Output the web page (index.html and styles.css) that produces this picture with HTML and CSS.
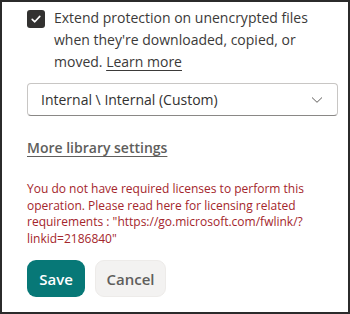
FILE: index.html
```html
<!DOCTYPE html>
<html>
<head>
<meta charset="utf-8">
<link rel="stylesheet" href="styles.css">
</head>
<body>
<div class="frame">
  <div class="check-row">
    <span class="checkbox">
      <svg width="12" height="12" viewBox="0 0 12 12"><path d="M2.2 6.3 L4.8 8.8 L9.8 3.4" fill="none" stroke="#fff" stroke-width="1.6" stroke-linecap="round" stroke-linejoin="round"/></svg>
    </span>
    <p class="check-text">Extend protection on unencrypted files when they're downloaded, copied, or moved. <a class="learn">Learn more</a></p>
  </div>
  <div class="dropdown">
    <span class="dd-text">Internal \ Internal (Custom)</span>
    <svg class="chev" width="12" height="8" viewBox="0 0 12 8"><path d="M1 1.5 L6 6.3 L11 1.5" fill="none" stroke="#605e5c" stroke-width="1"/></svg>
  </div>
  <a class="more">More library settings</a>
  <p class="error">You do not have required licenses to perform this operation. Please read here for licensing related requirements : "https://go.microsoft.com/fwlink/?linkid=2186840"</p>
  <div class="buttons">
    <button class="btn save">Save</button>
    <button class="btn cancel">Cancel</button>
  </div>
</div>
</body>
</html>
```
FILE: styles.css
```css
* { box-sizing: border-box; }
html, body { margin: 0; padding: 0; background: #fff; }
body { font-family: "Open Sans", "Noto Sans", sans-serif; color: #323130; }
.frame {
  width: 350px;
  height: 314px;
  border: 2px solid #2b2b2b;
  padding: 5px 10px 0 25px;
}
.check-row { display: flex; align-items: flex-start; gap: 9px; }
.checkbox {
  flex: none;
  width: 18px; height: 18px;
  margin-top: 3px;
  background: #323130;
  border-radius: 3px;
  display: flex; align-items: center; justify-content: center;
}
.check-text {
  margin: 0;
  font-size: 14px;
  line-height: 22px;
  color: #3b3a39;
}
.learn { color: #3b3a39; font-weight: 500; text-decoration: underline; text-underline-offset: 3px; }
.dropdown {
  margin-top: 10px;
  height: 33px;
  border: 1px solid #c8c6c4;
  border-bottom-color: #8a8886;
  border-radius: 4px;
  display: flex; align-items: center; justify-content: space-between;
  padding: 0 14px 0 13px;
  font-size: 14px;
  color: #323130;
}
.more {
  display: block;
  margin-top: 21px;
  font-size: 14px;
  line-height: 22px;
  font-weight: 600;
  color: #605e5c;
  text-decoration: underline;
  text-underline-offset: 3px;
}
.error {
  margin: 22px 0 0;
  font-size: 12px;
  line-height: 16.5px;
  color: #a4262c;
}
.buttons { display: flex; gap: 10px; margin-top: 13px; }
.btn {
  height: 37px;
  border: none;
  border-radius: 9px;
  font-family: "Open Sans", "Noto Sans", sans-serif;
  font-size: 15px;
  font-weight: 600;
  padding: 0;
}
.save { width: 58px; background: #077877; color: #fff; }
.cancel { width: 71px; background: #f3f2f1; color: #605e5c; border: 1px solid #edebe9; }
```
